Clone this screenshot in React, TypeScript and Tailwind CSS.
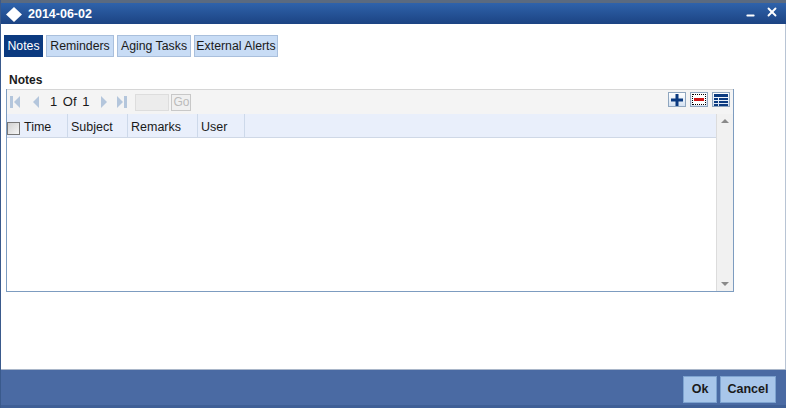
import { Minus, X } from 'lucide-react'

const tabs = [
  { label: 'Notes', width: 'w-[39px]', active: true },
  { label: 'Reminders', width: 'w-[68px]', active: false },
  { label: 'Aging Tasks', width: 'w-[74px]', active: false },
  { label: 'External Alerts', width: 'w-[84px]', active: false },
]

const columns = [
  { label: 'Time', width: 'w-[47px]' },
  { label: 'Subject', width: 'w-[60px]' },
  { label: 'Remarks', width: 'w-[70px]' },
  { label: 'User', width: 'w-[47px]' },
]

function PagerArrow({ dir, end }: { dir: 'left' | 'right'; end?: boolean }) {
  return (
    <svg width="12" height="14" viewBox="0 0 12 14" className="shrink-0">
      {dir === 'left' ? (
        <>
          {end && <rect x="1" y="1" width="3" height="12" fill="#b4c6dc" />}
          <path d={end ? 'M11 1v12L5 7z' : 'M9 1v12L3 7z'} fill="#b4c6dc" />
        </>
      ) : (
        <>
          <path d={end ? 'M1 1v12l6-6z' : 'M3 1v12l6-6z'} fill="#b4c6dc" />
          {end && <rect x="8" y="1" width="3" height="12" fill="#b4c6dc" />}
        </>
      )}
    </svg>
  )
}

function ToolButton({ children, dotted }: { children: React.ReactNode; dotted?: boolean }) {
  return (
    <div className="flex h-[15px] w-[18px] items-center justify-center border border-[#8fa6bf] bg-gradient-to-b from-white to-[#d5e2f2]">
      {dotted ? (
        <div className="flex h-[11px] w-[14px] items-center justify-center border border-dotted border-black bg-white">
          {children}
        </div>
      ) : (
        children
      )}
    </div>
  )
}

export default function App() {
  return (
    <div className="flex h-[408px] w-[786px] flex-col overflow-hidden border-l-[1px] border-[#3a5a8c] bg-white font-['Liberation_Sans',Arial,sans-serif] text-[13px] text-[#1a1a1a]">
      <div className="h-[3px] shrink-0 bg-[#5a6a80]" />
      {/* title bar */}
      <div className="flex h-[21px] shrink-0 items-center bg-gradient-to-b from-[#2f63ab] to-[#1c4383] pl-[5px] pr-[7px] text-white">
        <div className="mt-[2px] h-[15px] w-[16px] shrink-0">
          <svg width="16" height="15" viewBox="0 0 16 15">
            <path d="M8 0l8 7.500-8 7.500-8-7.500z" fill="#fff" />
          </svg>
        </div>
        <span className="ml-[6px] mt-[2px] text-[12.5px] font-bold leading-none">2014-06-02</span>
        <div className="ml-auto flex items-center gap-[9px]">
          <Minus size={11} strokeWidth={4} className="mt-[4px]" />
          <X size={14} strokeWidth={3.2} className="-mt-[4px]" />
        </div>
      </div>

      <div className="flex min-h-0 flex-1 flex-col border-r border-[#b8c4d4] pl-[3px]">
        {/* tabs */}
        <div className="mt-[11px] flex h-[22px] shrink-0 gap-[3px]">
          {tabs.map((tab) => (
            <div
              key={tab.label}
              className={`${tab.width} flex items-center justify-center whitespace-nowrap border pt-[1px] text-[12.3px] ${
                tab.active
                  ? 'border-[#0b3a80] bg-[#0b3a80] text-white'
                  : 'border-[#a9bfdc] bg-[#c8dcf5] text-[#1a1a1a]'
              }`}
            >
              {tab.label}
            </div>
          ))}
        </div>

        <div className="ml-[5px] mt-[16px] text-[12px] font-bold leading-[14px]">Notes</div>

        {/* grid */}
        <div className="ml-[2px] mt-[2px] flex h-[203px] w-[728px] shrink-0 flex-col border border-t-0 border-[#7d9cc0]">
          <div className="flex h-[25px] shrink-0 items-center border-t border-[#d6d6d6] bg-[#f4f4f4] pl-[2px] pr-[3px]">
            <PagerArrow dir="left" end />
            <div className="w-[9px]" />
            <PagerArrow dir="left" />
            <span className="ml-[8px] whitespace-nowrap text-[13px] [word-spacing:2px]">1 Of 1</span>
            <div className="w-[9px]" />
            <PagerArrow dir="right" />
            <div className="w-[6px]" />
            <PagerArrow dir="right" end />
            <div className="ml-[7px] h-[17px] w-[34px] border border-[#dddddd] bg-[#ececec]" />
            <div className="ml-[2px] flex h-[17px] w-[20px] items-center justify-center border border-[#c8c8c8] bg-[#f0f0f0] text-[12px] text-[#bbbbbb]">
              Go
            </div>
            <div className="mb-[5px] ml-auto flex items-center gap-[4px]">
              <ToolButton>
                <svg width="12" height="12" viewBox="0 0 12 12">
                  <path d="M4.500 0h3v4.500H12v3H7.500V12h-3V7.500H0v-3h4.500z" fill="#0b3a80" />
                </svg>
              </ToolButton>
              <ToolButton dotted>
                <div className="h-[3px] w-[10px] bg-[#d01818]" />
              </ToolButton>
              <ToolButton>
                <svg width="14" height="12" viewBox="0 0 14 12">
                  <path d="M0 0h14v3H0zM0 4h4v2H0zM5 4h9v2H5zM0 7h4v2H0zM5 7h9v2H5zM0 10h4v2H0zM5 10h9v2H5z" fill="#0b3a80" />
                </svg>
              </ToolButton>
            </div>
          </div>

          <div className="flex min-h-0 flex-1">
            <div className="flex min-w-0 flex-1 flex-col">
              <div className="flex h-[24px] shrink-0 items-center border-b border-[#cfd8e6] bg-[#e9effb]">
                <div className="mt-[5px] h-[13px] w-[13px] shrink-0 border border-[#777] bg-gradient-to-br from-[#d0d0d0] to-[#f6f6f6]" />
                <div className="w-[1px]" />
                {columns.map((col) => (
                  <div
                    key={col.label}
                    className={`${col.width} flex h-full shrink-0 items-center border-r border-[#cdd9ea] pl-[3px] pt-[4px] first:pl-[2px] text-[12.5px]`}
                  >
                    {col.label}
                  </div>
                ))}
              </div>
              <div className="flex-1 bg-white" />
            </div>
            {/* scrollbar */}
            <div className="flex w-[17px] shrink-0 flex-col items-center justify-between border-l border-[#dcdcdc] bg-[#f1f1f1] py-[5px]">
              <div className="h-0 w-0 border-x-[4px] border-b-[4px] border-x-transparent border-b-[#8a8a8a]" />
              <div className="h-0 w-0 border-x-[4px] border-t-[4px] border-x-transparent border-t-[#8a8a8a]" />
            </div>
          </div>
        </div>
        <div className="flex-1" />
      </div>

      {/* footer */}
      <div className="flex h-[39px] shrink-0 items-start justify-end gap-[3px] border-t border-[#a9b6c9] border-b-[3px] border-b-[#3f5f96] bg-[#4a6aa3] pr-[10px] pt-[6px]">
        <button className="h-[27px] w-[34px] border border-[#7ea3d0] bg-[#a8c6ea] text-[12.5px] font-bold text-[#1a1a1a]">
          Ok
        </button>
        <button className="h-[27px] w-[56px] border border-[#7ea3d0] bg-[#a8c6ea] text-[12.5px] font-bold text-[#1a1a1a]">
          Cancel
        </button>
      </div>
    </div>
  )
}
